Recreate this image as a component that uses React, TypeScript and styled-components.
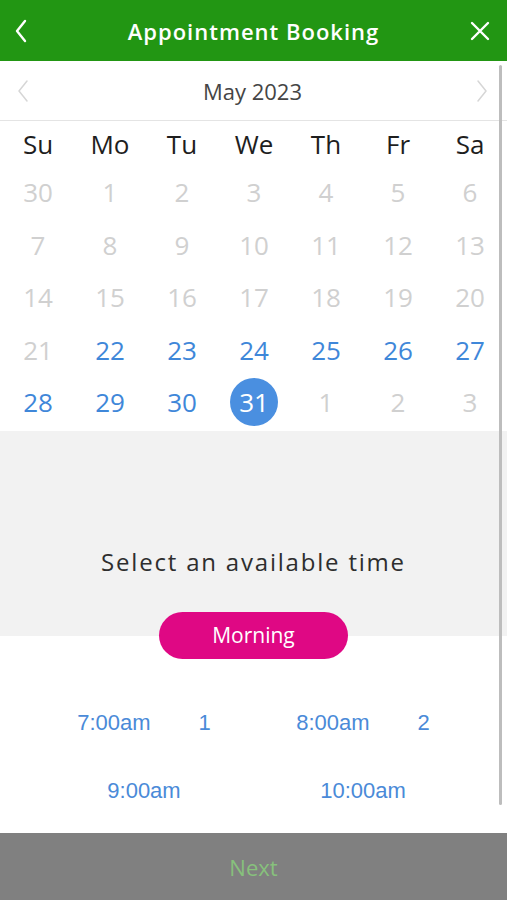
import styled, { createGlobalStyle } from "styled-components";

const GlobalStyle = createGlobalStyle`
  html, body {
    margin: 0;
    padding: 0;
    background: #fff;
  }
  * {
    box-sizing: border-box;
  }
`;

const Page = styled.div`
  width: 507px;
  height: 900px;
  display: flex;
  flex-direction: column;
  font-family: "Open Sans", "Liberation Sans", sans-serif;
  overflow: hidden;
`;

const Header = styled.header`
  height: 61px;
  flex-shrink: 0;
  background: #229613;
  display: flex;
  align-items: center;
  justify-content: space-between;
  padding: 0 14px 0 8px;
`;

const Title = styled.h1`
  margin: 0 0 0 6px;
  color: #fff;
  font-family: "Open Sans", sans-serif;
  font-weight: 600;
  font-size: 22px;
  letter-spacing: 1px;
`;

const IconButton = styled.button`
  border: 0;
  background: none;
  padding: 0;
  width: 26px;
  height: 26px;
  display: flex;
  align-items: center;
  justify-content: center;
`;

const Body = styled.main`
  flex: 1;
  position: relative;
  display: flex;
  flex-direction: column;
`;

const ScrollThumb = styled.div`
  position: absolute;
  right: 5px;
  top: 4px;
  width: 3px;
  height: 740px;
  border-radius: 2px;
  background: #bdbdbd;
`;

const MonthBar = styled.div`
  height: 60px;
  display: flex;
  align-items: center;
  justify-content: space-between;
  padding: 0 18px 0 16px;
  border-bottom: 1px solid #e4e4e4;
`;

const MonthLabel = styled.span`
  font-size: 22px;
  color: #454545;
`;

const Grid = styled.div`
  display: grid;
  grid-template-columns: repeat(7, 72px);
  padding: 0 0 2px 2px;
`;

const DayName = styled.div`
  height: 45px;
  display: flex;
  align-items: center;
  justify-content: center;
  font-size: 26px;
  color: #1e1e1e;
`;

const DateCell = styled.div`
  height: 52.5px;
  display: flex;
  align-items: center;
  justify-content: center;
`;

const DateNum = styled.span<{ $kind: "muted" | "open" | "selected" }>`
  width: 48px;
  height: 48px;
  border-radius: 50%;
  display: flex;
  align-items: center;
  justify-content: center;
  font-size: 26px;
  color: ${(p) =>
    p.$kind === "muted" ? "#d0d0d0" : p.$kind === "open" ? "#3f87d9" : "#fff"};
  background: ${(p) => (p.$kind === "selected" ? "#4a8fe0" : "transparent")};
`;

const TimePanel = styled.section`
  height: 205px;
  flex-shrink: 0;
  background: #f2f2f2;
  display: flex;
  flex-direction: column;
  align-items: center;
  justify-content: flex-end;
`;

const PanelTitle = styled.h2`
  margin: 0 0 35px;
  font-weight: 400;
  font-size: 24px;
  line-height: 30px;
  letter-spacing: 1.8px;
  color: #2e2e2e;
`;

const PeriodButton = styled.button`
  position: relative;
  z-index: 1;
  width: 189px;
  height: 47px;
  margin-bottom: -23px;
  border: 0;
  border-radius: 24px;
  background: #df0884;
  color: #fff;
  font-family: "Open Sans", sans-serif;
  font-size: 21px;
`;

const Slots = styled.div`
  display: grid;
  grid-template-columns: repeat(2, 219px);
  grid-auto-rows: 68px;
  justify-content: center;
  padding-top: 53px;
`;

const Slot = styled.div`
  display: flex;
  align-items: center;
  justify-content: center;
  gap: 48px;
  font-family: "Liberation Sans", Arial, sans-serif;
  font-size: 22px;
  color: #4a8ad8;
`;

const Footer = styled.footer`
  height: 67px;
  flex-shrink: 0;
  background: #808080;
  display: flex;
  align-items: center;
  justify-content: center;
  font-size: 22px;
  color: #87c17c;
`;

const days = ["Su", "Mo", "Tu", "We", "Th", "Fr", "Sa"];

type Kind = "muted" | "open" | "selected";

const dates: { n: number; kind: Kind }[] = [
  { n: 30, kind: "muted" },
  ...Array.from({ length: 21 }, (_, i) => ({ n: i + 1, kind: "muted" as Kind })),
  ...Array.from({ length: 9 }, (_, i) => ({ n: i + 22, kind: "open" as Kind })),
  { n: 31, kind: "selected" },
  { n: 1, kind: "muted" },
  { n: 2, kind: "muted" },
  { n: 3, kind: "muted" },
];

const slots = [
  { time: "7:00am", count: "1" },
  { time: "8:00am", count: "2" },
  { time: "9:00am" },
  { time: "10:00am" },
];

const Chevron = ({ dir, color, w }: { dir: "left" | "right"; color: string; w: number }) => (
  <svg width="14" height="24" viewBox="0 0 14 24" fill="none">
    <path
      d={dir === "left" ? "M11 2 L3 12 L11 22" : "M3 2 L11 12 L3 22"}
      stroke={color}
      strokeWidth={w}
      strokeLinecap="round"
      strokeLinejoin="round"
    />
  </svg>
);

export default function App() {
  return (
    <>
      <GlobalStyle />
      <Page>
        <Header>
          <IconButton aria-label="Back">
            <Chevron dir="left" color="#fff" w={2.4} />
          </IconButton>
          <Title>Appointment Booking</Title>
          <IconButton aria-label="Close">
            <svg width="20" height="20" viewBox="0 0 20 20">
              <path d="M2 2 L18 18 M18 2 L2 18" stroke="#fff" strokeWidth="2.4" strokeLinecap="round" />
            </svg>
          </IconButton>
        </Header>
        <Body>
          <MonthBar>
            <Chevron dir="left" color="#d6d6d6" w={1.5} />
            <MonthLabel>May 2023</MonthLabel>
            <Chevron dir="right" color="#d6d6d6" w={1.5} />
          </MonthBar>
          <Grid>
            {days.map((d) => (
              <DayName key={d}>{d}</DayName>
            ))}
            {dates.map((d, i) => (
              <DateCell key={i}>
                <DateNum $kind={d.kind}>{d.n}</DateNum>
              </DateCell>
            ))}
          </Grid>
          <TimePanel>
            <PanelTitle>Select an available time</PanelTitle>
            <PeriodButton>Morning</PeriodButton>
          </TimePanel>
          <Slots>
            {slots.map((s) => (
              <Slot key={s.time}>
                <span>{s.time}</span>
                {s.count && <span>{s.count}</span>}
              </Slot>
            ))}
          </Slots>
          <ScrollThumb />
        </Body>
        <Footer>Next</Footer>
      </Page>
    </>
  );
}
